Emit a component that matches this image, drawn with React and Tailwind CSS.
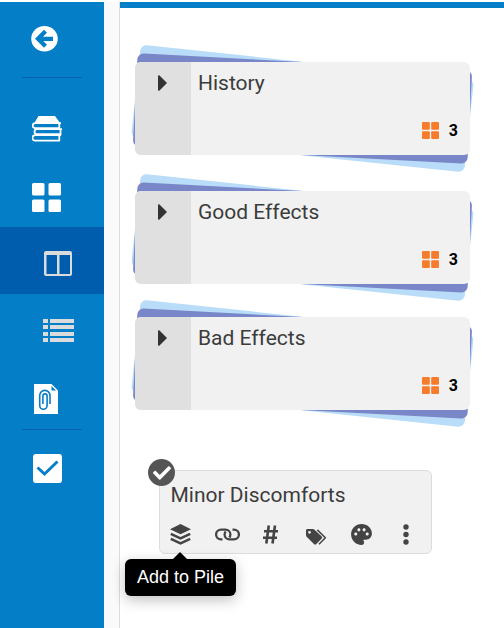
import { FaCheck } from 'react-icons/fa';
import { MdPalette } from 'react-icons/md';

const PILES = [
  { title: 'History', count: 3, gap: 'mb-9' },
  { title: 'Good Effects', count: 3, gap: 'mb-[33px]' },
  { title: 'Bad Effects', count: 3, gap: 'mb-[60px]' },
];

function BackIcon() {
  return (
    <svg width="27" height="26" viewBox="0 0 27 26" fill="none">
      <ellipse cx="13.5" cy="12.700" rx="13.3" ry="12.700" fill="#fff" />
      <path d="M14.500 5.300L7 12.800l7.500 7.500M7.500 12.800H22" stroke="#047ec6" strokeWidth="4.200" />
    </svg>
  );
}

function BooksIcon() {
  return (
    <svg width="30" height="26" viewBox="0 0 30 26" fill="none" stroke="#fff" strokeWidth="1.800">
      <path d="M6.500 0h16.500l5.500 7.500H2z" fill="#fff" stroke="none" />
      <path d="M29 7.200H3.200a2.500 2.500 0 0 0 0 5H28M27.300 7.500v5" />
      <path d="M30 13.200H5a2.500 2.500 0 0 0 0 5h24.500M28.500 13.500v5" />
      <path d="M29 19.200H3.200a2.600 2.600 0 0 0 0 5.500H28M27.300 19.500v5" />
    </svg>
  );
}

function GridIcon() {
  return (
    <svg width="29" height="29" viewBox="0 0 29 29" fill="currentColor">
      <rect width="12.500" height="12.500" rx="1.500" />
      <rect x="16.500" width="12.500" height="12.500" rx="1.500" />
      <rect y="16.500" width="12.500" height="12.500" rx="1.500" />
      <rect x="16.500" y="16.500" width="12.500" height="12.500" rx="1.500" />
    </svg>
  );
}

function SmallGridIcon() {
  return (
    <svg width="17" height="17" viewBox="0 0 17 17" fill="#f47c2c">
      <rect width="7.800" height="7.800" rx="1" />
      <rect x="9.200" width="7.800" height="7.800" rx="1" />
      <rect y="9.200" width="7.800" height="7.800" rx="1" />
      <rect x="9.200" y="9.200" width="7.800" height="7.800" rx="1" />
    </svg>
  );
}

function ColumnsIcon() {
  return (
    <svg width="28" height="25" viewBox="0 0 28 25">
      <path
        fill="#d9dbdd"
        fillRule="evenodd"
        d="M2 0h24a2 2 0 0 1 2 2v21a2 2 0 0 1-2 2H2a2 2 0 0 1-2-2V2a2 2 0 0 1 2-2zM2.500 4v19H13V4zM15.500 4v19H26V4z"
      />
    </svg>
  );
}

function ListIcon() {
  return (
    <svg width="31" height="23" viewBox="0 0 31 23" fill="#d9dbdd">
      <path d="M0 0h5v4H0zM7 0h24v4H7zM0 6h5v4H0zM7 6h24v4H7zM0 13h5v4H0zM7 13h24v4H7zM0 19h5v4H0zM7 19h24v4H7z" />
    </svg>
  );
}

function AttachmentIcon() {
  return (
    <svg width="24" height="30" viewBox="0 0 24 30" fill="none">
      <path d="M0 0h17.500l6.500 6.500V30H0z" fill="#fff" />
      <path d="M17.500 2v4.500H22z" fill="#047ec6" />
      <path
        d="M16 20v-8.500a5 5 0 0 0-10.300 0v10a3.700 3.700 0 0 0 7.400 0v-9.500a2.100 2.100 0 0 0-4.200 0V20"
        stroke="#047ec6"
        strokeWidth="1.600"
      />
    </svg>
  );
}

function CheckboxIcon() {
  return (
    <svg width="29" height="29" viewBox="0 0 29 29" fill="none">
      <rect width="29" height="29" rx="3" fill="#fff" />
      <path d="M4.500 13.500l7 6.500L24.500 7.500" stroke="#047ec6" strokeWidth="3" />
    </svg>
  );
}

function LayersIcon() {
  return (
    <svg width="21" height="21" viewBox="0 0 21 21" fill="none">
      <path d="M10.500 0L21 5.300l-10.500 5L0 5.300z" fill="#444" />
      <path d="M.8 9.900l9.700 4.500 9.700-4.500M.8 14.900l9.700 4.500 9.700-4.500" stroke="#444" strokeWidth="2.500" />
    </svg>
  );
}

function LinkIcon() {
  return (
    <svg width="25" height="13" viewBox="0 0 25 13" fill="none" stroke="#444" strokeWidth="2.300">
      <path d="M7.500 11.400H6a4.900 4.900 0 0 1 0-9.800h4.500a4.900 4.900 0 0 1 4.900 4.900c0 1.100-.4 2.200-1.100 3" />
      <path d="M17.500 1.600H19a4.900 4.900 0 0 1 0 9.800h-4.500a4.900 4.900 0 0 1-4.900-4.900c0-1.100.4-2.200 1.100-3" />
    </svg>
  );
}

function HashIcon() {
  return (
    <svg width="15" height="19" viewBox="0 0 15 19" fill="none" stroke="#444" strokeWidth="2.600">
      <path d="M5.800.5l-2.500 18M12 .5L9.500 18.500M1 6.200h14M0 12.800h14" />
    </svg>
  );
}

function TagsIcon() {
  return (
    <svg width="21" height="16" viewBox="0 0 21 16">
      <path
        fill="#444"
        fillRule="evenodd"
        d="M1.500 0h5.200c.9 0 1.500.3 2.100.9L15.700 7.600c.6.600.6 1.300 0 1.900l-5.600 5.700c-.6.600-1.300.6-1.900 0L.9 8.100C.3 7.500 0 6.900 0 6V1.500C0 .6.6 0 1.500 0zM3.500 1.900a1.400 1.400 0 1 0 0 2.800 1.400 1.400 0 0 0 0-2.800z"
      />
      <path d="M11.300.9l8 7.800-6.300 6.500" fill="none" stroke="#444" strokeWidth="1.500" />
    </svg>
  );
}

function Sidebar() {
  return (
    <nav className="flex h-[626px] w-[104px] shrink-0 flex-col bg-[#047ec6] text-white">
      <div className="mx-[22px] h-[76px] border-b border-[#0060ad] pl-[9px] pt-6">
        <BackIcon />
      </div>
      <div className="flex h-[94px] items-end pb-[30px] pl-8">
        <BooksIcon />
      </div>
      <div className="flex h-[55px] pl-8 pt-[11px]">
        <GridIcon />
      </div>
      <div className="flex h-[67px] bg-[#005dae] pl-11 pt-6">
        <ColumnsIcon />
      </div>
      <div className="flex h-[90px] pl-[43px] pt-[25px]">
        <ListIcon />
      </div>
      <div className="mx-[22px] flex h-[46px] border-b border-[#0060ad] pl-3">
        <AttachmentIcon />
      </div>
      <div className="pl-[33px] pt-6">
        <CheckboxIcon />
      </div>
    </nav>
  );
}

function Pile({ title, count, gap }) {
  return (
    <section className={['relative h-[93px] w-[335px]', gap].join(' ')}>
      <div className="absolute inset-0 rotate-6 rounded-md bg-[#b9dcf9]" />
      <div className="absolute inset-0 rotate-3 rounded-md bg-[#7986c8]" />
      <div className="relative flex h-full overflow-hidden rounded-md bg-[#f1f1f1]">
        <div className="w-14 bg-[#e0e0e0] pl-[23px] pt-[12.5px]">
          <svg width="9" height="16" viewBox="0 0 9 16">
            <path d="M0 1.500C0 0 .8 0 1.500.600L9 8l-7.500 7.400C.8 16 0 16 0 14.500z" fill="#333" />
          </svg>
        </div>
        <div className="flex flex-1 flex-col justify-between pb-3 pl-[7px] pr-3 pt-1.5">
          <h2 className="text-[21px] leading-[30px]">{title}</h2>
          <div className="flex items-center justify-end gap-2.5 pb-1">
            <SmallGridIcon />
            <span className="pt-0.5 text-[16px] font-bold leading-4 text-black">{count}</span>
          </div>
        </div>
      </div>
    </section>
  );
}

function SelectedCard() {
  return (
    <section className="relative ml-6 h-[84px] w-[273px] rounded-md border border-[#dcdcdc] bg-[#f1f1f1] pl-2.5 pt-[9px]">
      <span className="absolute -left-3 -top-3 flex size-[27px] items-center justify-center rounded-full bg-[#555] text-white">
        <FaCheck size={18} />
      </span>
      <h2 className="pl-[0.5px] text-[21px] leading-[30px]">Minor Discomforts</h2>
      <div className="mt-[14px] flex h-[21px] items-center text-[#444]">
        <span className="w-[45px]"><LayersIcon /></span>
        <span className="w-12"><LinkIcon /></span>
        <span className="w-[43px]"><HashIcon /></span>
        <span className="w-[43px] pt-1"><TagsIcon /></span>
        <span className="w-[54px]"><MdPalette size={25} /></span>
        <svg width="6" height="21" viewBox="0 0 6 21" fill="#444">
          <circle cx="3" cy="3" r="2.700" />
          <circle cx="3" cy="10.500" r="2.700" />
          <circle cx="3" cy="18" r="2.700" />
        </svg>
      </div>
      <div
        role="tooltip"
        className="absolute -left-[35px] top-[88px] h-[37px] w-[111px] rounded-md bg-black text-center font-['Liberation_Sans'] text-[18px] leading-[36px] text-white shadow-[0_4px_14px_rgba(0,0,0,0.25)]"
      >
        <svg width="14" height="7" viewBox="0 0 14 7" className="absolute -top-[7px] left-12">
          <path d="M0 7l7-7 7 7z" />
        </svg>
        Add to Pile
      </div>
    </section>
  );
}

export default function App() {
  return (
    <div className="flex h-[628px] w-[504px] overflow-hidden bg-white pt-0.5 font-['Roboto',sans-serif] text-[#3c3c3c]">
      <Sidebar />
      <div className="w-4 shrink-0 border-r border-[#dcdcdc] bg-[#fafafa]" />
      <main className="flex-1 border-t-[6px] border-[#047ec6] pl-[15px] pt-[54px]">
        {PILES.map((pile) => (
          <Pile key={pile.title} {...pile} />
        ))}
        <SelectedCard />
      </main>
    </div>
  );
}
